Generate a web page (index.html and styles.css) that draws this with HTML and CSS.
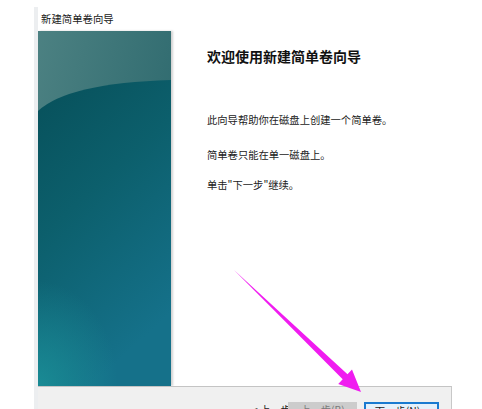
FILE: index.html
```html
<!DOCTYPE html>
<html lang="zh-CN">
<head>
<meta charset="utf-8">
<title>新建简单卷向导</title>
<link rel="stylesheet" href="styles.css">
</head>
<body>
<div class="window">
  <div class="titlebar">新建简单卷向导</div>
  <div class="main">
    <div class="side">
      <svg class="side-art" width="133" height="355" viewBox="0 0 133 355" aria-hidden="true">
        <defs>
          <linearGradient id="topg" x1="0" y1="0" x2="1" y2="0.6">
            <stop offset="0" stop-color="#4c8182"/>
            <stop offset="1" stop-color="#2c686d"/>
          </linearGradient>
          <linearGradient id="lowg" x1="0" y1="0" x2="0.4" y2="1">
            <stop offset="0" stop-color="#07505a"/>
            <stop offset="0.45" stop-color="#0c5f6c"/>
            <stop offset="1" stop-color="#15718a"/>
          </linearGradient>
          <radialGradient id="glow" cx="0" cy="1" r="1">
            <stop offset="0" stop-color="#1a8e96" stop-opacity="0.9"/>
            <stop offset="0.6" stop-color="#1a8e96" stop-opacity="0"/>
          </radialGradient>
        </defs>
        <rect width="133" height="355" fill="url(#topg)"/>
        <path d="M0,80 Q30,52 133,49 L133,355 L0,355 Z" fill="url(#lowg)"/>
        <rect x="0" y="180" width="133" height="175" fill="url(#glow)"/>
      </svg>
    </div>
    <div class="content">
      <h1 class="heading">欢迎使用新建简单卷向导</h1>
      <p class="line l1">此向导帮助你在磁盘上创建一个简单卷。</p>
      <p class="line l2">简单卷只能在单一磁盘上。</p>
      <p class="line l3">单击"下一步"继续。</p>
    </div>
  </div>
  <div class="footer">
    <span class="btn-text">&lt; 上一步(B)</span>
    <span class="btn btn-gray">上一步(B)</span>
    <span class="btn btn-primary">下一步(N) &gt;</span>
  </div>
</div>
<svg class="arrow" width="482" height="409" viewBox="0 0 482 409" aria-hidden="true">
  <polygon points="234,270 347.5,374.3 352,369.6 361,392 338.2,384 342.7,379.3" fill="#f01cf0"/>
</svg>
</body>
</html>
```
FILE: styles.css
```css
html, body {
  margin: 0;
  padding: 0;
  background: #ffffff;
  width: 482px;
  height: 409px;
  overflow: hidden;
  font-family: "Noto Sans CJK SC", "Noto Sans", sans-serif;
  color: #1a1a1a;
}

.window {
  margin-top: 7px;
  margin-left: 34px;
  width: 414px;
  border-left: 4px solid #eceef0;
  display: flex;
  flex-direction: column;
}

.titlebar {
  height: 24px;
  line-height: 24px;
  font-size: 10.4px;
  padding-left: 3px;
  color: #202020;
  background: #ffffff;
}

.main {
  height: 355px;
  display: flex;
  background: #ffffff;
}

.side {
  width: 133px;
  height: 355px;
  flex: none;
  box-shadow: 2px 0 2px rgba(0, 0, 0, 0.18);
}

.side-art {
  display: block;
}

.content {
  padding-left: 36px;
  flex: 1;
}

.heading {
  margin: 15px 0 0 0;
  font-size: 14px;
  line-height: 20px;
  font-weight: bold;
  color: #111111;
}

.line {
  margin: 0;
  font-size: 10.3px;
  line-height: 16px;
  color: #222222;
}

.l1 { margin-top: 46px; }
.l2 { margin-top: 19px; }
.l3 { margin-top: 14px; }

.footer {
  border-top: 1px solid #c4c4c4;
  background: #f0f0f0;
  height: 40px;
  display: flex;
  align-items: flex-start;
  padding-top: 15px;
  box-sizing: border-box;
  border-right: 1px solid #c8c8c8;
}

.btn-text {
  margin-left: 214px;
  width: 36px;
  font-size: 10.3px;
  line-height: 12px;
  padding-top: 2px;
  white-space: nowrap;
  overflow: hidden;
  color: #222222;
}

.btn {
  height: 23px;
  line-height: 12px;
  padding-top: 1px;
  font-size: 10.3px;
  text-align: center;
  box-sizing: border-box;
  white-space: nowrap;
}

.btn-gray {
  width: 69px;
  background: #cccccc;
  color: #7a7a7a;
  border: 1px solid #cccccc;
}

.btn-primary {
  margin-left: 7px;
  width: 75px;
  background: #e5f1fb;
  border: 2px solid #1a7ad0;
  color: #1a1a1a;
}

.arrow {
  position: absolute;
  left: 0;
  top: 0;
  pointer-events: none;
}
```
